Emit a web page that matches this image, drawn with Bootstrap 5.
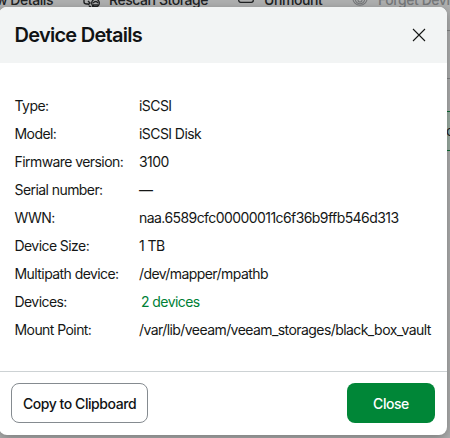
<!DOCTYPE html>
<html lang="en">
<head>
<meta charset="utf-8">
<meta name="viewport" content="width=device-width, initial-scale=1">
<title>Device Details</title>
<link href="https://cdn.jsdelivr.net/npm/bootstrap@5.3.0/dist/css/bootstrap.min.css" rel="stylesheet">
<style>
body{font-family:Inter,"Liberation Sans",sans-serif;font-size:14px;line-height:20px;color:#151716;background:#b0b1b1;width:450px;height:438px}
.backdrop-page{inset:0;color:#202223}
.toolbar-label{top:-10px;font-weight:500;font-size:14px;line-height:20px;white-space:nowrap;letter-spacing:-.44px}
.tool-icon{top:-9px}
.muted-tool{color:#77797b}
.side-line{left:446px;width:4px;height:1px;background:#858687}
.side-button{left:440px;top:111px;width:20px;height:40px;background:#9fb0a6;border:1px solid #0b6f34}
.side-letter{left:446px;top:121px;font-size:14px}
.device-dialog{left:-1px;top:7px;width:448px;height:428px;background:#fff;border-radius:8px;box-shadow:0 3px 12px rgba(0,0,0,.32)}
.dialog-head{height:56px;background:#f2f4f4;padding:0 21px 0 15.5px}
.dialog-title{font-size:20px;font-weight:600;line-height:28px;letter-spacing:-.73px;color:#111314}
.details-list{padding:29px 0 0 15.5px;flex:1}
.detail-row{height:28px}
.detail-row dt{width:124.5px;font-weight:400;letter-spacing:-.57px}
.detail-row dd{letter-spacing:-.57px;white-space:nowrap}
.devices-link{color:#007f36;padding-left:2px}
.dialog-foot{height:64px;border-top:1px solid #cdd2d4;padding:11px 12px}
.dialog-foot .btn{height:40px;border-radius:8px;font-size:14px;line-height:20px;font-weight:500;padding:2px 0 0;letter-spacing:-.44px}
.copy-btn{width:137px;border:1px solid #858b90;color:#111314}
.close-btn{width:88px;background:#008637;color:#fff;border:0}
</style>
<script src="https://cdn.jsdelivr.net/npm/bootstrap@5.3.0/dist/js/bootstrap.bundle.min.js"></script>
</head>
<body class="position-relative overflow-hidden">
<div class="backdrop-page position-absolute" aria-hidden="true">
  <span class="toolbar-label position-absolute" style="right:397px">View Details</span>
  <svg class="tool-icon position-absolute" style="left:83px" width="18" height="17" viewBox="0 0 18 17" fill="none" stroke="#202223" stroke-width="1.4"><path d="M1 9v2q0 2 3 2h2M5 10l2 2-2 2M6 15l2 1"/><circle cx="12.5" cy="12" r="3.8"/><path d="M10 12q3-3 5 0M10 14h5M9 16l2-1"/></svg>
  <span class="toolbar-label position-absolute" style="left:109px">Rescan Storage</span>
  <svg class="tool-icon position-absolute" style="left:238px" width="16" height="12" viewBox="0 0 16 12" fill="none" stroke="#202223" stroke-width="1.3"><rect x=".7" y=".7" width="14.6" height="10.6" rx="2"/></svg>
  <span class="toolbar-label position-absolute" style="left:264px">Unmount</span>
  <svg class="tool-icon position-absolute" style="left:352px" width="16" height="16" viewBox="0 0 16 16" fill="none" stroke="#77797b" stroke-width="1.1"><circle cx="8" cy="7" r="7.2"/><circle cx="8" cy="8" r="4.7"/><circle cx="8" cy="9" r="2"/></svg>
  <span class="toolbar-label muted-tool position-absolute" style="left:378px">Forget Device</span>
  <div class="side-line position-absolute" style="top:30px"></div>
  <div class="side-line position-absolute" style="top:78px"></div>
  <div class="side-button position-absolute"></div>
  <span class="side-letter position-absolute">c</span>
</div>
<section class="device-dialog position-absolute d-flex flex-column overflow-hidden" role="dialog" aria-labelledby="title">
  <header class="dialog-head d-flex align-items-center justify-content-between">
    <h1 class="dialog-title m-0" id="title">Device Details</h1>
    <button class="btn p-0 border-0 d-flex" aria-label="Close dialog"><svg width="14" height="14" viewBox="0 0 14 14" fill="none" stroke="#151716" stroke-width="1.1"><path d="M1 1l12 12M13 1L1 13"/></svg></button>
  </header>
  <dl class="details-list m-0">
    <div class="detail-row d-flex align-items-center"><dt>Type:</dt><dd class="m-0">iSCSI</dd></div>
    <div class="detail-row d-flex align-items-center"><dt>Model:</dt><dd class="m-0">iSCSI Disk</dd></div>
    <div class="detail-row d-flex align-items-center"><dt>Firmware version:</dt><dd class="m-0">3100</dd></div>
    <div class="detail-row d-flex align-items-center"><dt>Serial number:</dt><dd class="m-0">—</dd></div>
    <div class="detail-row d-flex align-items-center"><dt>WWN:</dt><dd class="m-0">naa.6589cfc00000011c6f36b9ffb546d313</dd></div>
    <div class="detail-row d-flex align-items-center"><dt>Device Size:</dt><dd class="m-0">1 TB</dd></div>
    <div class="detail-row d-flex align-items-center"><dt>Multipath device:</dt><dd class="m-0">/dev/mapper/mpathb</dd></div>
    <div class="detail-row d-flex align-items-center"><dt>Devices:</dt><dd class="m-0"><a href="#" class="devices-link text-decoration-none">2 devices</a></dd></div>
    <div class="detail-row d-flex align-items-center"><dt>Mount Point:</dt><dd class="m-0">/var/lib/veeam/veeam_storages/black_box_vault</dd></div>
  </dl>
  <footer class="dialog-foot d-flex justify-content-between">
    <button class="btn copy-btn">Copy to Clipboard</button>
    <button class="btn close-btn">Close</button>
  </footer>
</section>
</body>
</html>
